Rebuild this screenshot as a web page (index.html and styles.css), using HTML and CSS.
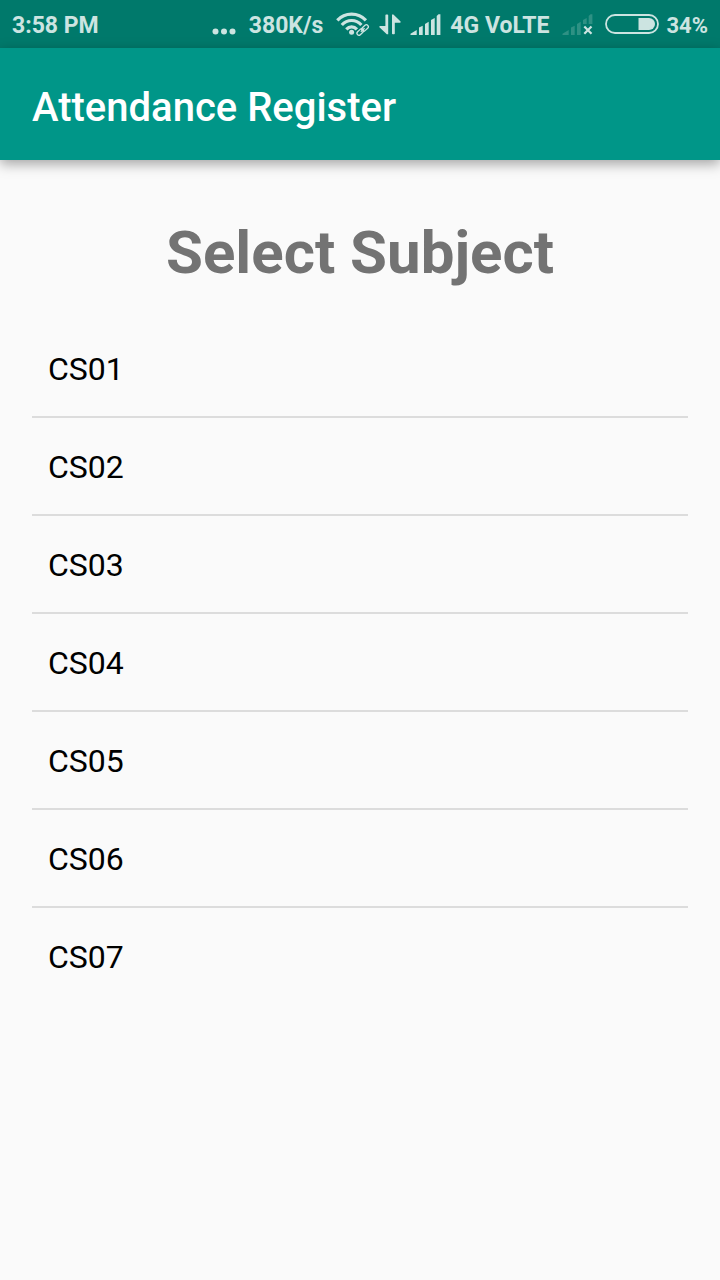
FILE: index.html
```html
<!DOCTYPE html>
<html lang="en">
<head>
<meta charset="utf-8">
<meta name="viewport" content="width=device-width, initial-scale=1">
<title>Attendance Register</title>
<link rel="stylesheet" href="styles.css">
</head>
<body>
<div class="status-bar">
  <span class="clock">3:58 PM</span>
  <div class="indicators">
    <svg class="icon" width="24" height="48" viewBox="0 0 24 48" aria-hidden="true">
      <circle cx="3.5" cy="31.5" r="3"/><circle cx="12" cy="31.5" r="3"/><circle cx="20.5" cy="31.5" r="3"/>
    </svg>
    <span class="speed">380K/s</span>
    <svg class="icon" width="34" height="48" viewBox="0 0 34 48" aria-hidden="true">
      <g class="stroke" stroke-width="3.200">
        <path d="M1.300 20.300C9 12 22.200 12 29.900 20.300"/>
        <path d="M5.800 25C11.300 19 19.900 19 25.400 25"/>
        <path d="M10.300 29.300C13.300 26 17.900 26 20.900 29.300"/>
      </g>
      <circle cx="15.600" cy="32.300" r="2.500"/>
      <g class="halo">
        <rect x="20.500" y="30" width="7.500" height="4" rx="2" transform="rotate(-42 24.300 32)"/>
        <rect x="25.300" y="26" width="7.500" height="4" rx="2" transform="rotate(-42 29 28)"/>
      </g>
      <g class="stroke" stroke-width="1.300">
        <rect x="20.500" y="30" width="7.500" height="4" rx="2" transform="rotate(-42 24.300 32)"/>
        <rect x="25.300" y="26" width="7.500" height="4" rx="2" transform="rotate(-42 29 28)"/>
        <path d="M24.800 31.800L28.600 28.200"/>
      </g>
    </svg>
    <svg class="icon" width="22" height="48" viewBox="0 0 22 48" aria-hidden="true">
      <path d="M6.400 15.300Q6.400 14.500 7.200 14.500H8.400Q9.200 14.500 9.200 15.300V34.300H7.800L0.400 27.200Q0 26 1.200 26H6.400Z"/>
      <path d="M13 14.500H14.400L21.600 21.600Q22 22.800 20.800 22.800H15.800V33.500Q15.800 34.300 15 34.300H13.800Q13 34.300 13 33.500Z"/>
    </svg>
    <svg class="icon" width="31" height="48" viewBox="0 0 31 48" aria-hidden="true">
      <path d="M0.500 35V33.800L6.700 30V35ZM9 35V27.500L12.700 25.700V35ZM15 35V24L18.700 21.800V35ZM21 35V20L24.700 18V35ZM26.700 35V16L28.500 14.200H30.400V35Z"/>
    </svg>
    <span class="network">4G VoLTE</span>
    <svg class="icon" width="31" height="48" viewBox="0 0 31 48" aria-hidden="true">
      <path class="faded" d="M0.500 35V33.800L6.700 30V35ZM9 35V27.500L12.700 25.700V35ZM15 35V24L18.700 21.800V35ZM21 24V20L24.700 18V24ZM26.700 24V16L28.500 14.200H30.400V24Z"/>
      <path class="stroke" stroke-width="2.200" d="M22.300 26.500L29.500 33.700M29.500 26.500L22.300 33.700"/>
    </svg>
    <svg class="icon battery" width="54" height="48" viewBox="0 0 54 48" aria-hidden="true">
      <rect class="stroke" stroke-width="1.800" x="1" y="15" width="52" height="18" rx="9"/>
      <path d="M33.500 18H44A6 6 0 0 1 44 30H33.500Z"/>
    </svg>
    <span class="charge">34%</span>
  </div>
</div>
<header class="app-bar">
  <h1 class="app-title">Attendance Register</h1>
</header>
<main class="content">
  <h2 class="heading">Select Subject</h2>
  <ul class="subjects">
    <li class="subject"><button class="subject-button" type="button">CS01</button></li>
    <li class="subject"><button class="subject-button" type="button">CS02</button></li>
    <li class="subject"><button class="subject-button" type="button">CS03</button></li>
    <li class="subject"><button class="subject-button" type="button">CS04</button></li>
    <li class="subject"><button class="subject-button" type="button">CS05</button></li>
    <li class="subject"><button class="subject-button" type="button">CS06</button></li>
    <li class="subject"><button class="subject-button" type="button">CS07</button></li>
  </ul>
</main>
</body>
</html>
```
FILE: styles.css
```css
* {
  box-sizing: border-box;
}

body {
  margin: 0;
  min-height: 100vh;
  background: #fafafa;
  color: #000;
  font-family: Roboto, "Noto Sans", sans-serif;
}

.status-bar {
  display: flex;
  align-items: center;
  justify-content: space-between;
  height: 48px;
  padding: 0 12px;
  background: #00796b;
  color: #cce4e1;
  font-size: 23px;
  font-weight: 700;
  line-height: 46px;
  white-space: nowrap;
}

.clock,
.speed,
.network,
.charge {
  padding-top: 4px;
}

.indicators {
  display: flex;
  align-items: center;
  gap: 9px;
}

.speed {
  margin: 0 4px;
}

.network {
  margin-right: 4px;
}

.charge {
  margin-left: -2px;
  font-size: 22px;
}

.battery {
  margin-left: 3px;
}

.icon {
  display: block;
  flex: none;
  fill: #cce4e1;
}

.stroke {
  fill: none;
  stroke: #cce4e1;
}

.halo {
  fill: #00796b;
  stroke: #00796b;
  stroke-width: 3px;
}

.faded {
  fill: #2e9184;
}

.app-bar {
  padding: 36px 32px 28px;
  background: #009688;
  box-shadow: 0 4px 12px rgba(0, 0, 0, 0.35);
}

.app-title {
  margin: 0;
  color: #fff;
  font-size: 40px;
  font-weight: 500;
  line-height: 48px;
}

.content {
  padding: 57px 32px;
}

.heading {
  margin: 0 0 31px;
  color: #737373;
  font-size: 60px;
  font-weight: 700;
  line-height: 72px;
  text-align: center;
}

.subjects {
  margin: 0;
  padding: 0;
  list-style: none;
}

.subject + .subject {
  border-top: 2px solid #dcdcdc;
}

.subject-button {
  display: block;
  width: 100%;
  height: 96px;
  padding: 2px 16px 0;
  border: 0;
  background: none;
  color: inherit;
  font: inherit;
  font-size: 32px;
  text-align: left;
}
```
